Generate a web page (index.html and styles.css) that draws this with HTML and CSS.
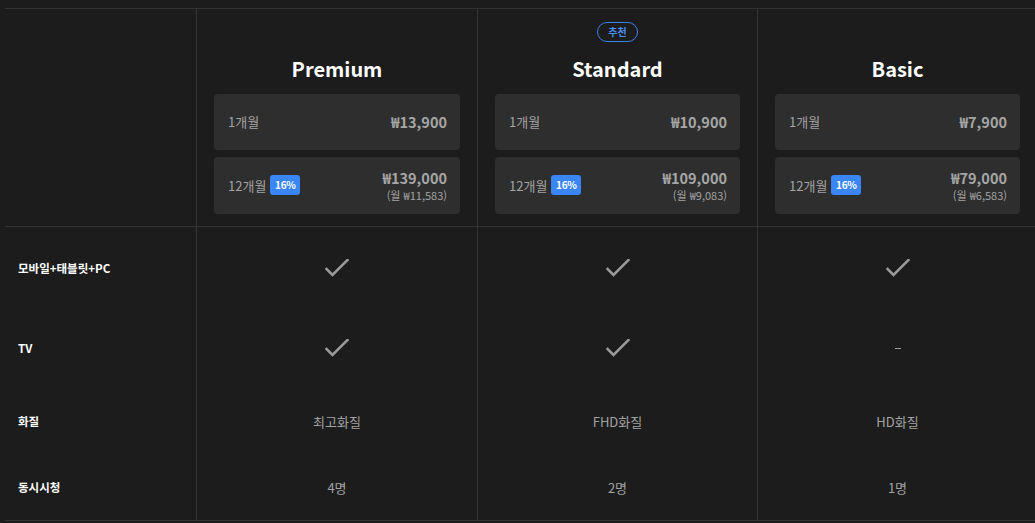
FILE: index.html
```html
<!DOCTYPE html>
<html lang="ko">
<head>
<meta charset="utf-8">
<link rel="stylesheet" href="styles.css">
</head>
<body>
<div class="table">
  <div class="row head-row">
    <div class="label-cell"></div>
    <div class="plan">
      <div class="badge-slot"></div>
      <div class="plan-title">Premium</div>
      <div class="card">
        <span class="period">1개월</span>
        <span class="price">₩13,900</span>
      </div>
      <div class="card card-year">
        <span class="period">12개월 <span class="off">16%</span></span>
        <span class="price-col"><span class="price">₩139,000</span><span class="monthly">(월 ₩11,583)</span></span>
      </div>
    </div>
    <div class="plan">
      <div class="badge-slot"><span class="rec">추천</span></div>
      <div class="plan-title">Standard</div>
      <div class="card">
        <span class="period">1개월</span>
        <span class="price">₩10,900</span>
      </div>
      <div class="card card-year">
        <span class="period">12개월 <span class="off">16%</span></span>
        <span class="price-col"><span class="price">₩109,000</span><span class="monthly">(월 ₩9,083)</span></span>
      </div>
    </div>
    <div class="plan">
      <div class="badge-slot"></div>
      <div class="plan-title">Basic</div>
      <div class="card">
        <span class="period">1개월</span>
        <span class="price">₩7,900</span>
      </div>
      <div class="card card-year">
        <span class="period">12개월 <span class="off">16%</span></span>
        <span class="price-col"><span class="price">₩79,000</span><span class="monthly">(월 ₩6,583)</span></span>
      </div>
    </div>
  </div>

  <div class="row feat-row tall r1">
    <div class="label-cell">모바일+태블릿+PC</div>
    <div class="val"><svg class="check" viewBox="0 0 24 18" width="24" height="18"><polyline points="1.5,10 7.5,16 22.5,1" /></svg></div>
    <div class="val"><svg class="check" viewBox="0 0 24 18" width="24" height="18"><polyline points="1.5,10 7.5,16 22.5,1" /></svg></div>
    <div class="val"><svg class="check" viewBox="0 0 24 18" width="24" height="18"><polyline points="1.5,10 7.5,16 22.5,1" /></svg></div>
  </div>
  <div class="row feat-row tall r2">
    <div class="label-cell">TV</div>
    <div class="val"><svg class="check" viewBox="0 0 24 18" width="24" height="18"><polyline points="1.5,10 7.5,16 22.5,1" /></svg></div>
    <div class="val"><svg class="check" viewBox="0 0 24 18" width="24" height="18"><polyline points="1.5,10 7.5,16 22.5,1" /></svg></div>
    <div class="val"><span class="dash"></span></div>
  </div>
  <div class="row feat-row short">
    <div class="label-cell">화질</div>
    <div class="val">최고화질</div>
    <div class="val">FHD화질</div>
    <div class="val">HD화질</div>
  </div>
  <div class="row feat-row short last">
    <div class="label-cell">동시시청</div>
    <div class="val">4명</div>
    <div class="val">2명</div>
    <div class="val">1명</div>
  </div>
</div>
</body>
</html>
```

FILE: styles.css
```css
html, body {
  margin: 0;
  padding: 0;
  background: #1c1c1c;
  overflow: hidden;
}
body {
  font-family: "Noto Sans CJK KR", "Noto Sans", sans-serif;
  color: #a7a7a7;
}
.table {
  margin: 8px 0 0 5px;
  width: 1032px;
  border-top: 1px solid #333333;
}
.row {
  display: grid;
  grid-template-columns: 191px 281px 280px 280px;
}
.row > div + div {
  border-left: 1px solid #333333;
}
.head-row {
  border-bottom: 1px solid #333333;
}
.plan {
  padding: 13px 17px 12px 17px;
  display: flex;
  flex-direction: column;
}
.badge-slot {
  height: 20px;
  display: flex;
  justify-content: center;
}
.rec {
  box-sizing: border-box;
  height: 20px;
  width: 41px;
  border: 1px solid #3a82ee;
  border-radius: 10px;
  color: #4a8ff5;
  font-size: 10px;
  font-weight: 700;
  line-height: 17px;
  text-align: center;
}
.plan-title {
  margin: 11px 0 9px;
  height: 32px;
  line-height: 32px;
  text-align: center;
  color: #ffffff;
  font-size: 20px;
  font-weight: 700;
}
.card {
  background: #2e2e2e;
  border-radius: 4px;
  height: 56px;
  padding: 0 13px 0 14px;
  display: flex;
  align-items: center;
  justify-content: space-between;
}
.card > .period { margin-top: -1px; }
.card-year {
  margin-top: 7px;
  height: 57px;
}
.period {
  font-size: 13px;
  color: #a3a3a3;
  display: flex;
  align-items: center;
}
.off {
  display: inline-block;
  margin-left: 4px;
  width: 30px;
  height: 20px;
  line-height: 20px;
  border-radius: 3px;
  background: #3b86f7;
  color: #ffffff;
  font-size: 10px;
  font-weight: 700;
  text-align: center;
  letter-spacing: -0.3px;
}
.price {
  font-size: 14.5px;
  font-weight: 700;
  color: #a6a6a6;
  line-height: 18px;
}
.card > .price { margin-top: -1px; }
.price-col {
  display: flex;
  flex-direction: column;
  align-items: flex-end;
  margin-top: 0;
}
.monthly {
  font-size: 11px;
  color: #a3a3a3;
  line-height: 16px;
}
.feat-row .label-cell {
  padding-left: 13px;
  color: #ffffff;
  font-size: 11.5px;
  font-weight: 700;
  display: flex;
  align-items: center;
}
.val {
  display: flex;
  align-items: center;
  justify-content: center;
  font-size: 13px;
  color: #a3a3a3;
}
.tall.r1 { height: 81px; }
.tall.r2 { height: 80px; }
.short { height: 66px; }
.last { border-bottom: 1px solid #333333; }
.check {
  display: block;
  fill: none;
  stroke: #9a9a9a;
  stroke-width: 2.6;
  stroke-linecap: square;
  stroke-linejoin: miter;
}
.dash {
  display: block;
  width: 6px;
  height: 1px;
  background: #a0a0a0;
}
```
